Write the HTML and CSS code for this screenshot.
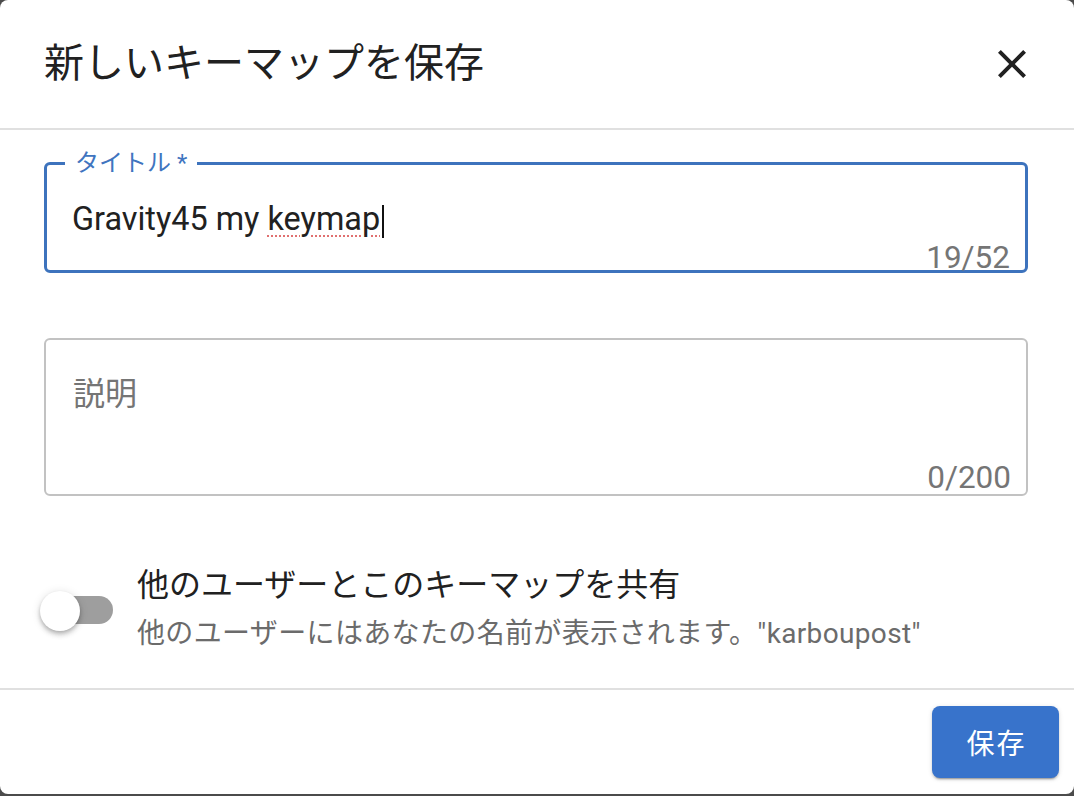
FILE: index.html
```html
<!DOCTYPE html>
<html lang="ja">
<head>
<meta charset="utf-8">
<title>新しいキーマップを保存</title>
<link rel="stylesheet" href="styles.css">
</head>
<body>
<div class="dialog">
  <header class="dialog-header">
    <h1 class="dialog-title">新しいキーマップを保存</h1>
    <button class="close-btn" aria-label="閉じる">
      <svg viewBox="0 0 24 24" width="48" height="48"><path d="M19 6.41L17.59 5 12 10.59 6.41 5 5 6.41 10.59 12 5 17.59 6.41 19 12 13.41 17.59 19 19 17.59 13.41 12z"/></svg>
    </button>
  </header>
  <div class="divider"></div>
  <div class="dialog-body">
    <div class="field field-focused">
      <span class="field-label">タイトル *</span>
      <div class="field-input">Gravity45 my <span class="misspelled">keymap</span><span class="caret"></span></div>
      <div class="field-counter counter-title">19/52</div>
    </div>
    <div class="field field-textarea">
      <div class="field-input placeholder">説明</div>
      <div class="field-counter counter-desc">0/200</div>
    </div>
    <div class="switch-row">
      <div class="switch">
        <div class="switch-track"></div>
        <div class="switch-thumb"></div>
      </div>
      <div class="switch-text">
        <div class="switch-label">他のユーザーとこのキーマップを共有</div>
        <div class="switch-hint">他のユーザーにはあなたの名前が表示されます。"karboupost"</div>
      </div>
    </div>
  </div>
  <div class="divider"></div>
  <footer class="dialog-actions">
    <button class="save-btn">保存</button>
  </footer>
</div>
</body>
</html>
```

FILE: styles.css
```css
html, body {
  margin: 0;
  padding: 0;
}
body {
  background: #4b4b4b;
  height: 796px;
  overflow: hidden;
  font-family: Roboto, "Noto Sans CJK JP", sans-serif;
  color: #212121;
}
.dialog {
  width: 1074px;
  height: 794px;
  background: #ffffff;
  border-radius: 8px;
  display: flex;
  flex-direction: column;
  overflow: hidden;
}
.dialog-header {
  height: 128px;
  flex: 0 0 128px;
  display: flex;
  align-items: center;
  justify-content: space-between;
  padding: 0 38px 0 44px;
  box-sizing: border-box;
}
.dialog-title {
  margin: 0;
  font-size: 40px;
  line-height: 48px;
  font-weight: 400;
  color: #212121;
}
.close-btn {
  width: 48px;
  height: 48px;
  padding: 0;
  border: none;
  background: none;
  display: flex;
  align-items: center;
  justify-content: center;
}
.close-btn svg {
  fill: #212121;
  display: block;
}
.divider {
  height: 2px;
  flex: 0 0 2px;
  background: #e0e0e0;
}
.dialog-body {
  flex: 1;
  display: flex;
  flex-direction: column;
  padding: 0 46px 0 44px;
}
.field {
  position: relative;
  box-sizing: border-box;
  display: flex;
  flex-direction: column;
  border-radius: 6px;
  padding: 34px 15px 0 25px;
}
.field-focused {
  margin-top: 32px;
  height: 111px;
  border: 3px solid #3d73bd;
}
.field-textarea {
  margin-top: 65px;
  height: 158px;
  border: 2px solid #c2c2c2;
  padding-left: 27px;
}
.field-label {
  position: absolute;
  left: 18px;
  top: -14px;
  padding: 0 10px;
  background: #ffffff;
  font-size: 24px;
  line-height: 24px;
  color: #3f75bf;
}
.field-input {
  font-size: 32.4px;
  line-height: 40px;
  color: #212121;
  white-space: nowrap;
}
.placeholder {
  font-size: 32px;
  color: #757575;
}
.misspelled {
  text-decoration: underline dotted #e07070;
  text-decoration-thickness: 2px;
  text-underline-offset: 5px;
}
.caret {
  display: inline-block;
  width: 2px;
  height: 33px;
  background: #111111;
  vertical-align: -8px;
  margin-left: 2px;
}
.field-counter {
  margin-top: auto;
  align-self: flex-end;
  font-size: 31.5px;
  line-height: 30px;
  color: #757575;
}
.counter-title {
  margin-bottom: -3px;
}
.counter-desc {
  margin-bottom: 1px;
}
.switch-row {
  margin-top: 69px;
  display: flex;
  align-items: center;
}
.switch {
  display: grid;
  align-items: center;
  margin-left: -4px;
  margin-right: 24px;
  width: 73px;
  height: 40px;
}
.switch-track,
.switch-thumb {
  grid-area: 1 / 1;
}
.switch-track {
  width: 72px;
  height: 28px;
  margin-left: 1px;
  border-radius: 14px;
  background: #9e9e9e;
}
.switch-thumb {
  width: 40px;
  height: 40px;
  border-radius: 50%;
  background: #ffffff;
  margin-top: 2px;
  box-shadow: 0 2px 4px -1px rgba(0,0,0,.2), 0 4px 5px 0 rgba(0,0,0,.14), 0 1px 10px 0 rgba(0,0,0,.12);
}
.switch-text {
  display: flex;
  flex-direction: column;
}
.switch-label {
  font-size: 32px;
  line-height: 40px;
  color: #212121;
}
.switch-hint {
  margin-top: 11px;
  font-size: 28px;
  line-height: 36px;
  letter-spacing: 0.35px;
  color: #6b6b6b;
}
.dialog-actions {
  flex: 0 0 104px;
  box-sizing: border-box;
  display: flex;
  justify-content: flex-end;
  align-items: flex-start;
  padding: 16px 15px 16px 15px;
}
.save-btn {
  width: 127px;
  height: 72px;
  border: none;
  border-radius: 8px;
  background: #3873cb;
  color: #ffffff;
  font-family: Roboto, "Noto Sans CJK JP", sans-serif;
  font-size: 28px;
  letter-spacing: 2px;
  padding: 0 0 0 2px;
  box-shadow: 0 3px 1px -2px rgba(0,0,0,.2), 0 2px 2px 0 rgba(0,0,0,.14), 0 1px 5px 0 rgba(0,0,0,.12);
}
```
